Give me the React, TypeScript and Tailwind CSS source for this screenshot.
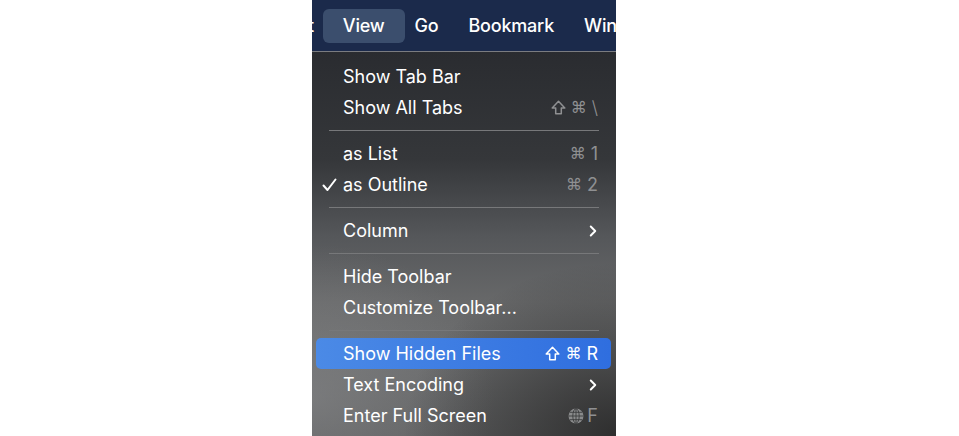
import { ChevronRight } from "lucide-react";

type Item =
  | { kind: "sep" }
  | {
      kind: "item";
      label: string;
      keys?: string;
      checked?: boolean;
      submenu?: boolean;
      globe?: boolean;
      active?: boolean;
    };

const items: Item[] = [
  { kind: "item", label: "Show Tab Bar" },
  { kind: "item", label: "Show All Tabs", keys: "⇧⌘\\" },
  { kind: "sep" },
  { kind: "item", label: "as List", keys: "⌘1" },
  { kind: "item", label: "as Outline", keys: "⌘2", checked: true },
  { kind: "sep" },
  { kind: "item", label: "Column", submenu: true },
  { kind: "sep" },
  { kind: "item", label: "Hide Toolbar" },
  { kind: "item", label: "Customize Toolbar..." },
  { kind: "sep" },
  { kind: "item", label: "Show Hidden Files", keys: "⇧⌘R", active: true },
  { kind: "item", label: "Text Encoding", submenu: true },
  { kind: "item", label: "Enter Full Screen", keys: "F", globe: true },
];

function Globe() {
  return (
    <svg width="16" height="16" viewBox="0 0 16 16" className="mr-[3px]">
      <circle cx="8" cy="8" r="7.5" fill="#8a8b8c" />
      <g stroke="#3b3c3d" strokeWidth="0.9" fill="none">
        <ellipse cx="8" cy="8" rx="3.2" ry="7.3" />
        <line x1="8" y1="0.5" x2="8" y2="15.5" />
        <line x1="0.5" y1="8" x2="15.5" y2="8" />
        <path d="M1.8 4.3h12.4M1.8 11.7h12.4" />
      </g>
    </svg>
  );
}

// outlined shift arrow, the font glyph is too small
function Shift() {
  return (
    <svg width="15" height="15" viewBox="0 0 15 15">
      <path
        d="M7.5 1.3 L13.8 8 L10.3 8 L10.3 13.8 L4.7 13.8 L4.7 8 L1.2 8 Z"
        stroke="currentColor"
        strokeWidth="1.5"
        strokeLinejoin="round"
        fill="none"
      />
    </svg>
  );
}

function Keys({ text, active }: { text: string; active?: boolean }) {
  return (
    <span className={`flex items-center gap-[5px] text-[18px] ${active ? "text-white" : "text-[#8f9092]"}`}>
      {text.split("").map((c, i) =>
        c === "⇧" ? (
          <Shift key={i} />
        ) : c === "⌘" ? (
          <span key={i} className="text-[16px] font-['DejaVu_Sans']">
            {c}
          </span>
        ) : (
          <span key={i} className={c === "\\" ? "font-light" : ""}>
            {c}
          </span>
        )
      )}
    </span>
  );
}

export default function App() {
  return (
    <div className="w-[959px] h-[436px] bg-white overflow-hidden font-[Inter,sans-serif]">
      <div className="ml-[312px] w-[304px] h-full flex flex-col">
        {/* menu bar */}
        <div className="h-[51px] shrink-0 bg-[#1b2a4b] overflow-hidden flex items-center text-white text-[18px] font-medium whitespace-nowrap tracking-[-0.2px]">
          <span className="-ml-[45px] pl-[15px] pr-[14px]">Edit</span>
          <span className="-mx-[5px] px-5 h-[34px] flex items-center rounded-[6px] bg-[#3b4e6d]">View</span>
          <span className="px-[15px]">Go</span>
          <span className="px-[15px]">Bookmark</span>
          <span className="px-[15px]">Window</span>
        </div>

        {/* dropdown */}
        <div className="flex-1 border-t border-[#7a7c80] text-white text-[18px] pt-[9px] bg-[radial-gradient(ellipse_70%_45%_at_100%_100%,rgba(38,38,38,0.85),transparent),radial-gradient(ellipse_60%_40%_at_0%_90%,rgba(135,136,138,0.6),transparent),linear-gradient(180deg,#2a2c30_0%,#35373a_28%,#55575a_48%,#676869_65%,#6a6b6c_80%,#5e5f60_100%)]">
          {items.map((it, i) =>
            it.kind === "sep" ? (
              <div key={i} className="h-[15px] pt-[7px] px-[17px]">
                <div className="h-px bg-[#77787a]" />
              </div>
            ) : (
              <div
                key={i}
                className={`relative h-[31px] ml-1 mr-[5px] pl-[27px] pr-[13px] flex items-center justify-between rounded-[5px] ${
                  it.active ? "bg-[linear-gradient(90deg,#4b8ae6,#2f6edf)]" : ""
                }`}
              >
                {it.checked && (
                  <svg width="15" height="14" viewBox="0 0 15 14" className="absolute left-[6px] top-[9px]">
                    <path d="M1.5 7.5 L5.5 12 L13.5 1.5" stroke="white" strokeWidth="2" fill="none" strokeLinecap="round" strokeLinejoin="round" />
                  </svg>
                )}
                <span>{it.label}</span>
                {it.keys && (
                  <span className="flex items-center">
                    {it.globe && <Globe />}
                    <Keys text={it.keys} active={it.active} />
                  </span>
                )}
                {it.submenu && <ChevronRight size={18} strokeWidth={2.6} className="-mr-[4px]" />}
              </div>
            )
          )}
        </div>
      </div>
    </div>
  );
}
